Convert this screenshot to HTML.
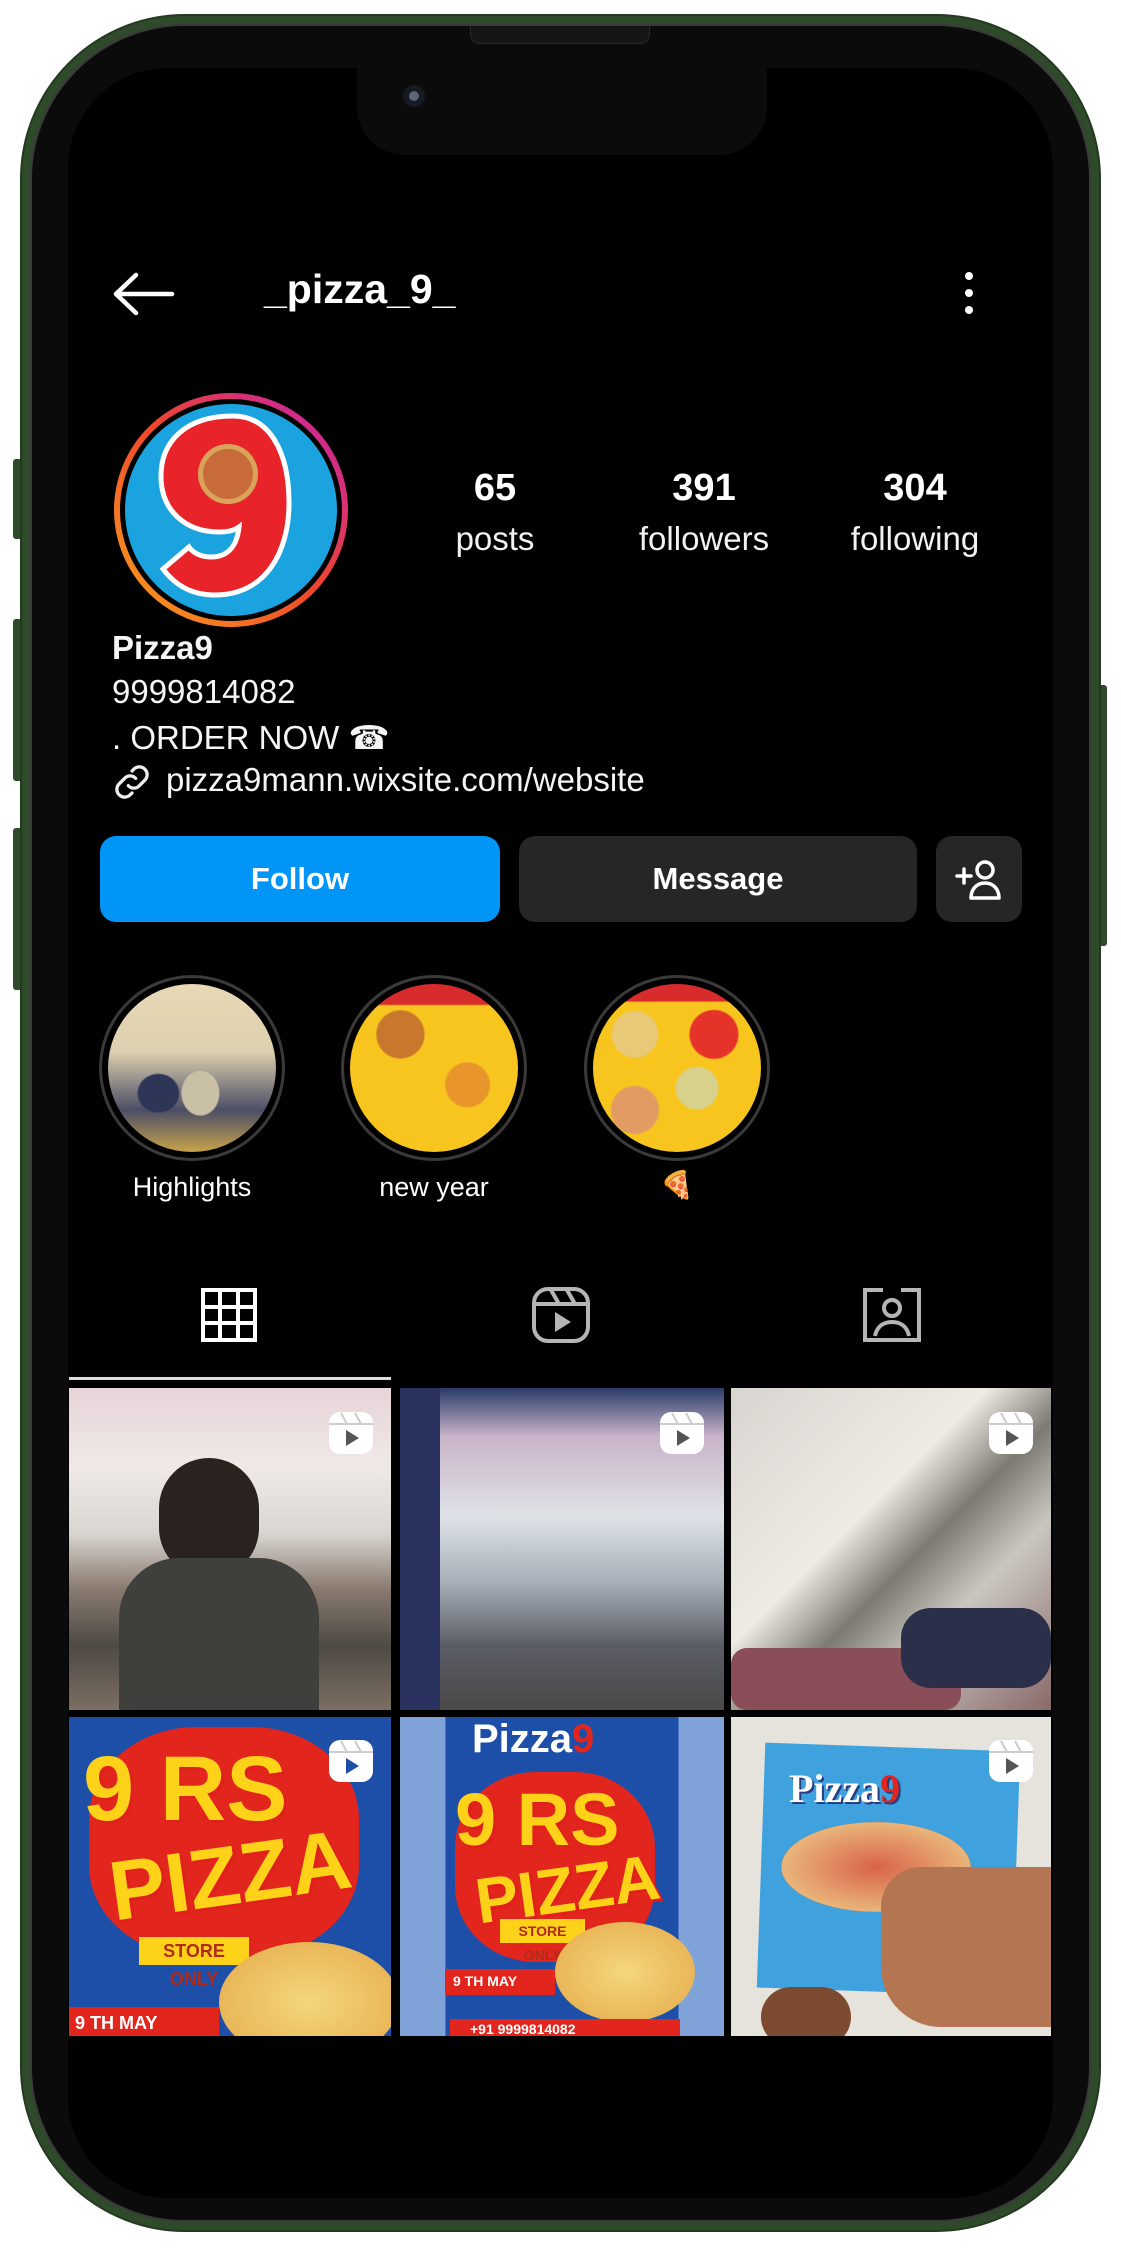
<!DOCTYPE html>
<html><head><meta charset="utf-8"><style>
*{margin:0;padding:0;box-sizing:border-box}
body{width:1121px;height:2250px;background:#fff;position:relative;overflow:hidden;font-family:"Liberation Sans",sans-serif;color:#fff}
.a{position:absolute}
.frame{left:20px;top:14px;width:1081px;height:2218px;border-radius:165px;background:#2f4a2a;border:2px solid #243a20}
.bezel{left:30px;top:24px;width:1061px;height:2198px;border-radius:155px;background:#0b0b0b;border:2px solid #3a3a3a}
.screen{left:68px;top:68px;width:985px;height:2130px;border-radius:100px;background:#000}
.btn{position:absolute;background:#2f4a2a;border-radius:3px}
.num{font-weight:bold;font-size:38px;text-align:center;width:200px;transform:translateX(-100px)}
.lbl{font-size:33px;text-align:center;width:220px;transform:translateX(-110px);color:#f2f2f2}
.bio{left:112px;font-size:33px;color:#f5f5f5}
.hl{border-radius:50%;border:3px solid #3a3a3a;width:186px;height:186px;padding:6px}
.hl div{width:100%;height:100%;border-radius:50%}
.hlt{font-size:27px;text-align:center;width:200px;transform:translateX(-100px)}
.cell{position:absolute;overflow:hidden}
.big{position:absolute;font-weight:bold;color:#ffd21a;text-shadow:3px 3px 0 #e0201b;font-family:"Liberation Sans",sans-serif}
</style></head><body>
<div class="btn" style="left:13px;top:459px;width:9px;height:80px"></div>
<div class="btn" style="left:13px;top:619px;width:9px;height:162px"></div>
<div class="btn" style="left:13px;top:828px;width:9px;height:162px"></div>
<div class="btn" style="left:1098px;top:685px;width:9px;height:261px"></div>
<div class="a frame"></div>
<div class="a bezel"></div>
<div class="a screen"></div>
<!-- notch -->
<div class="a" style="left:357px;top:40px;width:410px;height:115px;background:#0b0b0b;border-radius:0 0 48px 48px"></div>
<div class="a" style="left:470px;top:26px;width:180px;height:18px;background:#151515;border-radius:0 0 10px 10px;border:1px solid #2a2a2a;border-top:none"></div>
<div class="a" style="left:403px;top:85px;width:22px;height:22px;border-radius:50%;background:#161a22"></div>
<div class="a" style="left:409px;top:91px;width:10px;height:10px;border-radius:50%;background:#5a6577"></div>
<!-- header -->
<svg class="a" style="left:112px;top:272px" width="64" height="44" viewBox="0 0 64 44"><path d="M4 22H60M4 22L24 3M4 22L24 41" stroke="#fff" stroke-width="4.5" fill="none" stroke-linecap="round" stroke-linejoin="round"/></svg>
<div class="a" style="left:264px;top:266px;font-size:41px;font-weight:bold">_pizza_9_</div>
<svg class="a" style="left:962px;top:270px" width="14" height="46"><circle cx="7" cy="6" r="4" fill="#fff"/><circle cx="7" cy="23" r="4" fill="#fff"/><circle cx="7" cy="40" r="4" fill="#fff"/></svg>
<!-- avatar -->
<svg class="a" style="left:111px;top:390px" width="240" height="240" viewBox="0 0 240 240">
<defs><linearGradient id="g" x1="0" y1="1" x2="1" y2="0"><stop offset="0" stop-color="#f9a51c"/><stop offset=".5" stop-color="#f0462a"/><stop offset="1" stop-color="#c21fb6"/></linearGradient></defs>
<circle cx="120" cy="120" r="117" fill="url(#g)"/><circle cx="120" cy="120" r="111" fill="#000"/><circle cx="120" cy="120" r="106" fill="#1ba3e0"/>
<path d="M122 26c-48 0-72 26-72 60 0 36 26 56 58 56 10 0 16-2 20-5-2 20-12 30-28 30-10 0-18-4-22-10l-26 22c12 16 28 26 52 26 50 0 74-42 74-92 0-52-20-87-56-87z" fill="#e8232a" stroke="#fff" stroke-width="5"/>
<circle cx="117" cy="84" r="30" fill="#d9a45a"/><circle cx="117" cy="84" r="25" fill="#c86b3a"/>
</svg>
<!-- stats -->
<div class="a num" style="left:495px;top:467px">65</div>
<div class="a lbl" style="left:495px;top:520px">posts</div>
<div class="a num" style="left:704px;top:467px">391</div>
<div class="a lbl" style="left:704px;top:520px">followers</div>
<div class="a num" style="left:915px;top:467px">304</div>
<div class="a lbl" style="left:915px;top:520px">following</div>
<!-- bio -->
<div class="a bio" style="top:629px;font-weight:bold">Pizza9</div>
<div class="a bio" style="top:673px">9999814082</div>
<div class="a bio" style="top:718px">. ORDER NOW ☎</div>
<svg class="a" style="left:110px;top:760px" width="44" height="44" viewBox="0 0 24 24"><path d="M10 14a4 4 0 0 0 6 0l3-3a4 4 0 0 0-6-6l-1 1M14 10a4 4 0 0 0-6 0l-3 3a4 4 0 0 0 6 6l1-1" stroke="#eee" stroke-width="1.8" fill="none" stroke-linecap="round"/></svg>
<div class="a bio" style="left:166px;top:761px">pizza9mann.wixsite.com/website</div>
<!-- buttons -->
<div class="a" style="left:100px;top:836px;width:400px;height:86px;background:#0095f6;border-radius:16px;font-size:31px;font-weight:bold;text-align:center;line-height:86px">Follow</div>
<div class="a" style="left:519px;top:836px;width:398px;height:86px;background:#262626;border-radius:16px;font-size:31px;font-weight:bold;text-align:center;line-height:86px">Message</div>
<div class="a" style="left:936px;top:836px;width:86px;height:86px;background:#262626;border-radius:16px"></div>
<svg class="a" style="left:954px;top:856px" width="50" height="46" viewBox="0 0 50 46"><path d="M3 20h14M10 13v14" stroke="#fff" stroke-width="3.5" stroke-linecap="round"/><circle cx="31" cy="14" r="8" stroke="#fff" stroke-width="3.5" fill="none"/><path d="M17 42c0-9 6-15 14-15s14 6 14 15z" stroke="#fff" stroke-width="3.5" fill="none" stroke-linejoin="round"/></svg>
<!-- highlights -->
<div class="a hl" style="left:99px;top:975px"><div style="background:radial-gradient(ellipse at 30% 65%,#2e3658 0 12%,transparent 13%),radial-gradient(ellipse at 55% 65%,#c9c0a6 0 14%,transparent 15%),linear-gradient(180deg,#e8d9b5 0%,#ddd0b0 40%,#4b4e66 75%,#c9a34c 100%)"></div></div>
<div class="a hl" style="left:341px;top:975px"><div style="background:radial-gradient(circle at 70% 60%,#e8962c 0 14%,transparent 15%),radial-gradient(circle at 30% 30%,#c8772c 0 14%,transparent 15%),linear-gradient(180deg,#d82c2c 0 12%,#f7c51e 13%)"></div></div>
<div class="a hl" style="left:584px;top:975px"><div style="background:radial-gradient(circle at 72% 30%,#e53329 0 14%,transparent 15%),radial-gradient(circle at 25% 30%,#e9c978 0 13%,transparent 14%),radial-gradient(circle at 25% 75%,#e29b62 0 13%,transparent 14%),radial-gradient(circle at 62% 62%,#d7d18c 0 14%,transparent 15%),linear-gradient(180deg,#d82c2c 0 10%,#f7c51e 11%)"></div></div>
<div class="a hlt" style="left:192px;top:1172px">Highlights</div>
<div class="a hlt" style="left:434px;top:1172px">new year</div>
<div class="a hlt" style="left:677px;top:1169px">🍕</div>
<!-- tabs -->
<svg class="a" style="left:201px;top:1288px" width="56" height="54" viewBox="0 0 56 54"><rect x="2" y="2" width="52" height="50" fill="none" stroke="#fff" stroke-width="4"/><path d="M19 2v50M37 2v50M2 19h52M2 35h52" stroke="#fff" stroke-width="4"/></svg>
<svg class="a" style="left:531px;top:1286px" width="60" height="58" viewBox="0 0 60 58"><rect x="3" y="3" width="54" height="52" rx="14" fill="none" stroke="#b5b5b5" stroke-width="4"/><path d="M3 18h54M20 4l8 14M36 4l8 14" stroke="#b5b5b5" stroke-width="4"/><path d="M24 26v20l16-10z" fill="#b5b5b5"/></svg>
<svg class="a" style="left:861px;top:1286px" width="62" height="58" viewBox="0 0 62 58"><path d="M22 4H4v50h54V4H40" fill="none" stroke="#b5b5b5" stroke-width="4"/><circle cx="31" cy="22" r="8" fill="none" stroke="#b5b5b5" stroke-width="4"/><path d="M14 50c2-10 9-14 17-14s15 4 17 14" fill="none" stroke="#b5b5b5" stroke-width="4"/></svg>
<div class="a" style="left:69px;top:1377px;width:322px;height:3px;background:#dcdcdc"></div>
<!-- grid -->
<div class="cell" style="left:69px;top:1388px;width:322px;height:322px;background:linear-gradient(180deg,#e8d4d9 0%,#efe9e6 25%,#d9d6d1 45%,#8b7c71 62%,#4e4a44 80%,#7c6e62 100%)">
<div class="a" style="left:90px;top:70px;width:100px;height:120px;border-radius:50px;background:#2a221e"></div>
<div class="a" style="left:50px;top:170px;width:200px;height:160px;border-radius:60px 60px 0 0;background:#3f3f3b"></div></div>
<div class="cell" style="left:400px;top:1388px;width:324px;height:322px;background:linear-gradient(180deg,#2a3b6a 0%,#c9b3c8 15%,#dfe3e8 40%,#a8b0ba 60%,#5b5d66 80%,#4a4848 100%)">
<div class="a" style="left:0;top:0;width:40px;height:322px;background:#2a3360"></div></div>
<div class="cell" style="left:731px;top:1388px;width:320px;height:322px;background:linear-gradient(135deg,#d8d5d0 0%,#eeeae4 40%,#7d7a74 55%,#c9c6c0 70%,#8a6a6a 100%)">
<div class="a" style="left:0;top:260px;width:230px;height:62px;background:#8a4e58;border-radius:16px"></div>
<div class="a" style="left:170px;top:220px;width:150px;height:80px;background:#2c2f4a;border-radius:30px"></div></div>
<div class="cell" style="left:69px;top:1717px;width:322px;height:319px;background:#1e4fa8">
<div class="a" style="left:20px;top:10px;width:270px;height:230px;background:#e3261d;border-radius:40%"></div>
<div class="big" style="left:14px;top:20px;font-size:92px">9 RS</div>
<div class="big" style="left:40px;top:110px;font-size:84px;transform:rotate(-8deg)">PIZZA</div>
<div class="a" style="left:70px;top:220px;width:110px;height:28px;background:#ffd21a;color:#b02a1a;font-size:18px;font-weight:bold;text-align:center;line-height:28px">STORE ONLY</div>
<div class="a" style="left:150px;top:225px;width:180px;height:120px;border-radius:50%;background:radial-gradient(#f4d77a,#e4a94a)"></div>
<div class="a" style="left:0;top:290px;width:150px;height:30px;background:#e3261d;font-size:18px;font-weight:bold;padding:6px">9 TH MAY</div></div>
<div class="cell" style="left:400px;top:1717px;width:324px;height:319px;background:linear-gradient(90deg,#7fa3d8 0 14%,#1e4fa8 14% 86%,#7fa3d8 86%)">
<div class="a" style="left:72px;top:0;font-size:40px;font-weight:bold;color:#fff">Pizza<span style="color:#e3261d">9</span></div>
<div class="a" style="left:55px;top:55px;width:200px;height:190px;background:#e3261d;border-radius:40%"></div>
<div class="big" style="left:55px;top:60px;font-size:74px">9 RS</div>
<div class="big" style="left:75px;top:135px;font-size:64px;transform:rotate(-8deg)">PIZZA</div>
<div class="a" style="left:100px;top:202px;width:85px;height:24px;background:#ffd21a;color:#b02a1a;font-size:14px;font-weight:bold;text-align:center;line-height:24px">STORE ONLY</div>
<div class="a" style="left:155px;top:205px;width:140px;height:100px;border-radius:50%;background:radial-gradient(#f4d77a,#e4a94a)"></div>
<div class="a" style="left:45px;top:252px;width:110px;height:26px;background:#e3261d;font-size:14px;font-weight:bold;padding:4px 8px">9 TH MAY</div>
<div class="a" style="left:50px;top:302px;width:230px;height:20px;background:#e3261d;font-size:14px;font-weight:bold;padding:2px 20px">+91 9999814082</div></div>
<div class="cell" style="left:731px;top:1717px;width:320px;height:319px;background:#e6e2dc">
<div class="a" style="left:30px;top:30px;width:255px;height:245px;background:#3fa2de;transform:rotate(2deg)"></div>
<div class="a" style="left:58px;top:48px;font-size:40px;font-weight:bold;color:#fff;font-family:'Liberation Serif',serif;text-shadow:2px 2px 0 #2a3c80">Pizza<span style="color:#e3261d">9</span></div>
<div class="a" style="left:50px;top:105px;width:190px;height:90px;border-radius:50%;background:radial-gradient(#d9634a,#e9b57a 70%,#3a2a22 72%)"></div>
<div class="a" style="left:150px;top:150px;width:170px;height:160px;border-radius:40px 0 0 60px;background:#b37552"></div>
<div class="a" style="left:30px;top:270px;width:90px;height:60px;border-radius:30px;background:#7b4a30"></div></div>
<!-- reel icons -->
<svg class="a" style="left:327px;top:1410px" width="48" height="46" viewBox="0 0 48 46"><rect x="2" y="2" width="44" height="42" rx="11" fill="#fff"/><path d="M2 14h44M14 3l6 11M28 3l6 11" stroke="#ccc" stroke-width="2"/><path d="M19 20v16l13-8z" fill="#555"/></svg>
<svg class="a" style="left:658px;top:1410px" width="48" height="46" viewBox="0 0 48 46"><rect x="2" y="2" width="44" height="42" rx="11" fill="#fff"/><path d="M2 14h44M14 3l6 11M28 3l6 11" stroke="#ccc" stroke-width="2"/><path d="M19 20v16l13-8z" fill="#555"/></svg>
<svg class="a" style="left:987px;top:1410px" width="48" height="46" viewBox="0 0 48 46"><rect x="2" y="2" width="44" height="42" rx="11" fill="#fff"/><path d="M2 14h44M14 3l6 11M28 3l6 11" stroke="#ccc" stroke-width="2"/><path d="M19 20v16l13-8z" fill="#555"/></svg>
<svg class="a" style="left:327px;top:1738px" width="48" height="46" viewBox="0 0 48 46"><rect x="2" y="2" width="44" height="42" rx="11" fill="#fff"/><path d="M2 14h44M14 3l6 11M28 3l6 11" stroke="#ccc" stroke-width="2"/><path d="M19 20v16l13-8z" fill="#1e4fa8"/></svg>
<svg class="a" style="left:987px;top:1738px" width="48" height="46" viewBox="0 0 48 46"><rect x="2" y="2" width="44" height="42" rx="11" fill="#fff"/><path d="M2 14h44M14 3l6 11M28 3l6 11" stroke="#ccc" stroke-width="2"/><path d="M19 20v16l13-8z" fill="#555"/></svg>
</body></html>
